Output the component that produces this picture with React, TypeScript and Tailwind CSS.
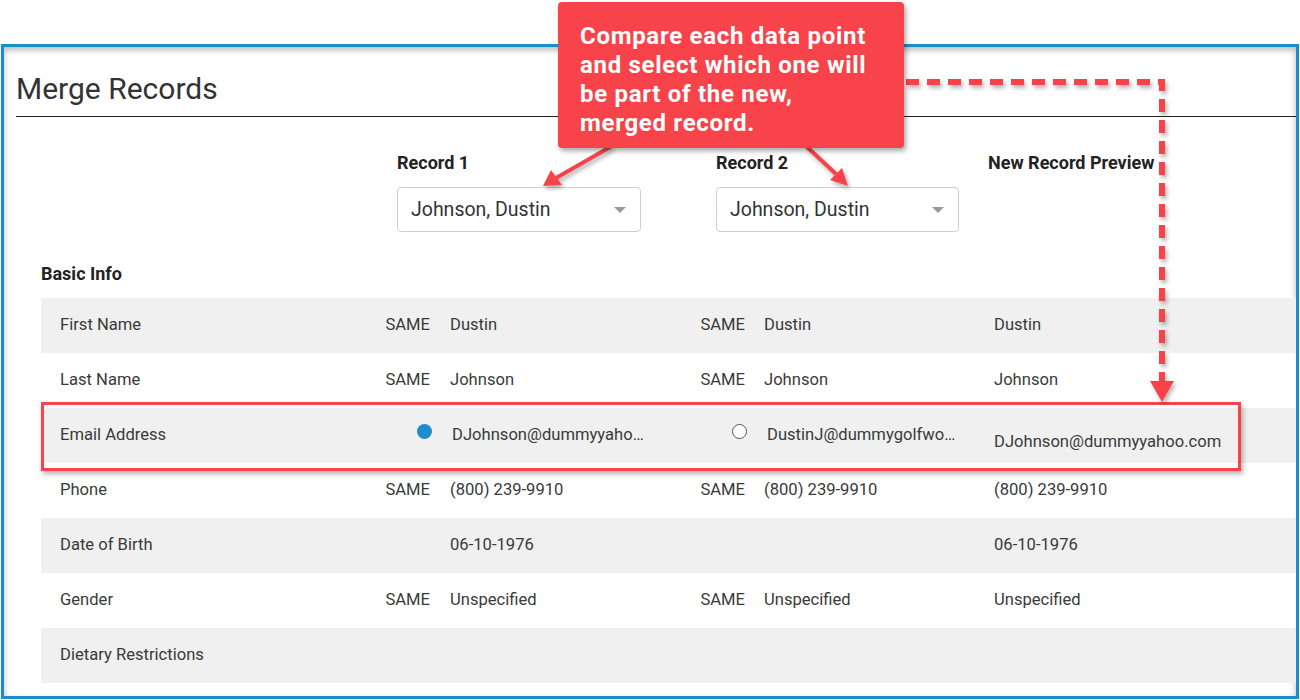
import React from 'react';

type Row = {
  label: string;
  s1?: string;
  v1?: string;
  s2?: string;
  v2?: string;
  preview?: string;
  radio?: boolean;
};

const ROWS: Row[] = [
  { label: 'First Name', s1: 'SAME', v1: 'Dustin', s2: 'SAME', v2: 'Dustin', preview: 'Dustin' },
  { label: 'Last Name', s1: 'SAME', v1: 'Johnson', s2: 'SAME', v2: 'Johnson', preview: 'Johnson' },
  { label: 'Email Address', v1: 'DJohnson@dummyyahoo.com', v2: 'DustinJ@dummygolfworld.com', preview: 'DJohnson@dummyyahoo.com', radio: true },
  { label: 'Phone', s1: 'SAME', v1: '(800) 239-9910', s2: 'SAME', v2: '(800) 239-9910', preview: '(800) 239-9910' },
  { label: 'Date of Birth', v1: '06-10-1976', preview: '06-10-1976' },
  { label: 'Gender', s1: 'SAME', v1: 'Unspecified', s2: 'SAME', v2: 'Unspecified', preview: 'Unspecified' },
  { label: 'Dietary Restrictions' },
];

const RED = '#f8434a';

function Select() {
  return (
    <div className="h-[45px] flex items-center justify-between pl-[13px] pr-[14px] bg-white border border-[#cfcfcf] rounded-[4px] text-[19.5px] font-normal text-[#333]">
      <span>Johnson, Dustin</span>
      <span className="w-0 h-0 border-l-[6px] border-r-[6px] border-t-[6px] border-l-transparent border-r-transparent border-t-[#9a9a9a]" />
    </div>
  );
}

function Radio({ checked }: { checked: boolean }) {
  return checked ? (
    <span className="inline-block w-[15px] h-[15px] rounded-full bg-[#1f8ccb]" />
  ) : (
    <span className="inline-block w-[15px] h-[15px] rounded-full border border-[#555] bg-white" />
  );
}

export default function App() {
  return (
    <div
      className="relative w-[1300px] h-[700px] overflow-hidden bg-white pt-[44px] pl-[1px]"
      style={{ fontFamily: 'Roboto, "Liberation Sans", sans-serif' }}
    >
      {/* frame */}
      <div className="w-[1298px] h-[655px] border-[3px] border-[#1b8dcd] shadow-[inset_0_3px_6px_rgba(0,0,0,0.28)]">
        <div className="ml-[12px] pt-[25px] pb-[10px] border-b border-[#222]">
          <h1 className="text-[30px] leading-[34px] text-[#333]">Merge Records</h1>
        </div>

        <div className="pl-[37px]">
          {/* column headers */}
          <div className="flex mt-[34px] text-[18px] leading-[24px] font-bold text-[#222]">
            <div className="w-[356px]" />
            <div className="w-[319px]">
              <div>Record 1</div>
              <div className="w-[244px] mt-[12px]">
                <Select />
              </div>
            </div>
            <div className="w-[272px]">
              <div>Record 2</div>
              <div className="w-[243px] mt-[12px]">
                <Select />
              </div>
            </div>
            <div>New Record Preview</div>
          </div>

          <div className="mt-[30px] text-[18px] leading-[24px] font-bold text-[#222]">Basic Info</div>

          <div className="mt-[12px] text-[16.6px] text-[#3a3a3a]">
            {ROWS.map((r, i) => (
              <div key={r.label} className={`h-[55px] flex items-center ${i % 2 === 0 ? 'bg-[#f0f0f0]' : 'bg-white'}`}>
                <div className="w-[334px] pl-[19px]">{r.label}</div>
                <div className="w-[55px] flex justify-end">
                  {r.radio ? <span className="-mt-[2px] mr-[-2px]"><Radio checked /></span> : r.s1}
                </div>
                <div className={`w-[259px] ${r.radio ? 'pl-[22px]' : 'pl-[20px]'}`}>
                  <div className="w-[196px] truncate">{r.v1}</div>
                </div>
                <div className="w-[56px] flex justify-end">
                  {r.radio ? <span className="-mt-[2px] mr-[-2px]"><Radio checked={false} /></span> : r.s2}
                </div>
                <div className={`w-[249px] ${r.radio ? 'pl-[22px]' : 'pl-[19px]'}`}>
                  <div className="w-[191px] truncate">{r.v2}</div>
                </div>
                <div className={r.radio ? 'pt-[13px]' : ''}>{r.preview}</div>
              </div>
            ))}
          </div>
        </div>
      </div>

      {/* highlight around the email row */}
      <div className="absolute left-[41px] top-[402px] w-[1200px] h-[69px] border-[3px] border-[#f8434a] shadow-[2px_3px_5px_rgba(0,0,0,0.3)]" />

      {/* arrows */}
      <svg className="absolute left-0 top-0 pointer-events-none" width="1300" height="700" viewBox="0 0 1300 700">
        <defs>
          <filter id="sh" x="-20%" y="-20%" width="140%" height="140%">
            <feDropShadow dx="2" dy="3" stdDeviation="2" floodColor="#000" floodOpacity="0.3" />
          </filter>
        </defs>
        <g filter="url(#sh)" fill={RED} stroke={RED}>
          <line x1="612" y1="146" x2="556" y2="178" strokeWidth="4" />
          <polygon points="543,186 551,170 562,185" stroke="none" />
          <line x1="806" y1="146" x2="836" y2="174" strokeWidth="4" />
          <polygon points="848,186 830,180 842,168" stroke="none" />
          <path d="M906 82 H1162 V384" fill="none" strokeWidth="6" strokeDasharray="13 8" />
          <polygon points="1150,381 1174,381 1162,402" stroke="none" />
        </g>
      </svg>

      {/* callout */}
      <div className="absolute left-[558px] top-[2px] w-[346px] h-[146px] rounded-[4px] bg-[#f8434a] shadow-[2px_3px_5px_rgba(0,0,0,0.35)] pl-[22px] pt-[20px] text-white font-bold text-[24px] leading-[29px] tracking-[0.7px]">
        Compare each data point
        <br />
        and select which one will
        <br />
        be part of the new,
        <br />
        merged record.
      </div>
    </div>
  );
}
